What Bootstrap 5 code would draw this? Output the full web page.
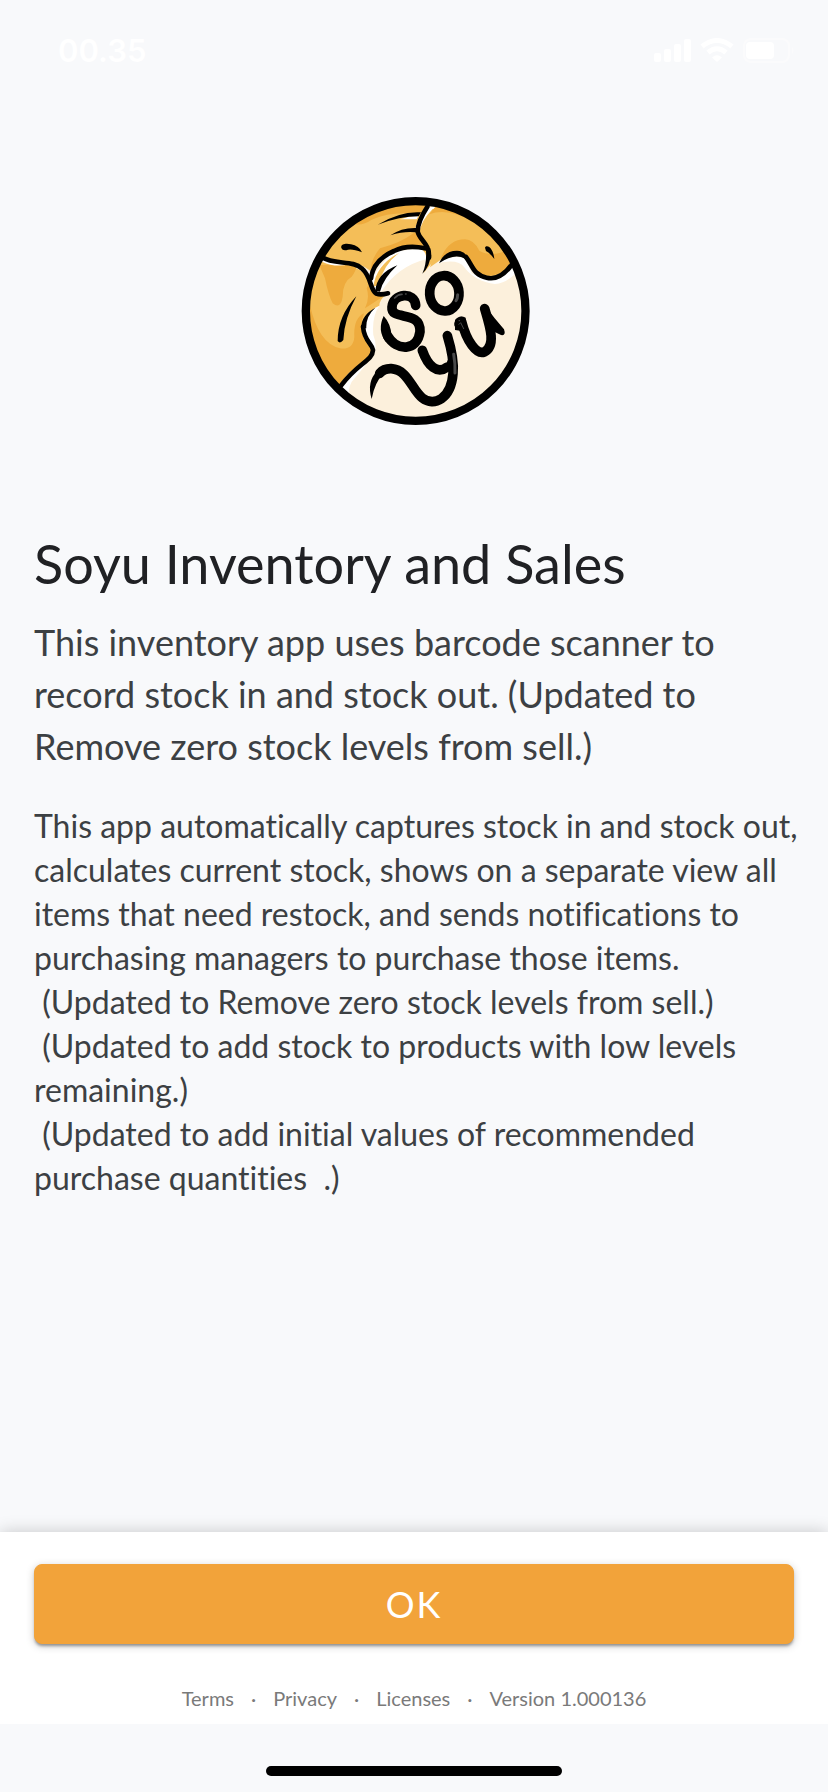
<!DOCTYPE html>
<html lang="en">
<head>
<meta charset="utf-8">
<meta name="viewport" content="width=device-width, initial-scale=1">
<title>Soyu Inventory and Sales</title>
<link href="https://cdn.jsdelivr.net/npm/bootstrap@5.3.0/dist/css/bootstrap.min.css" rel="stylesheet">
<style>
  body { background: #f8f9fb; color: #3c4043; font-family: Lato, "Liberation Sans", sans-serif; font-variant-ligatures: none; }
  .status-bar { padding: 31px 33px 0 58px; color: #fff; }
  .status-time { font: 600 31px/40px Inter, "Liberation Sans", sans-serif; }
  .page-text { padding: 0 24px 0 34px; }
  .logo-area { padding: 126px 0 103px; }
  .app-logo { width: 232px; height: 232px; }
  .app-title { color: #202124; font-size: 54px; line-height: 64px; margin-bottom: 20px; }
  .app-summary { font-size: 36px; line-height: 52px; margin-bottom: 32px; }
  .app-details { font-size: 32px; line-height: 44px; white-space: pre-wrap; }
  .action-panel { padding: 32px 34px 12px; box-shadow: 0 0 16px rgba(0,0,0,.2); clip-path: inset(-30px 0 0 0); }
  .btn-confirm {
    --bs-btn-color: #fff; --bs-btn-bg: #f2a33a; --bs-btn-border-color: #f2a33a;
    --bs-btn-hover-color: #fff; --bs-btn-hover-bg: #e6972d; --bs-btn-hover-border-color: #e6972d;
    --bs-btn-active-color: #fff; --bs-btn-active-bg: #d98b22; --bs-btn-active-border-color: #d98b22;
    font-size: 36px; line-height: 44px; padding: 17px; border-radius: 8px; letter-spacing: 2px;
    box-shadow: 0 3px 3px -1px rgba(0,0,0,.35), 0 2px 8px rgba(0,0,0,.2);
  }
  .legal-links { color: #7a7a7a; font-size: 20px; line-height: 28px; margin-top: 40px; gap: 17px; }
  .legal-links a { color: inherit; text-decoration: none; }
  .home-area { padding: 42px 0 16px; }
  .home-bar { width: 296px; height: 10px; background: #000; }
</style>
</head>
<body class="d-flex flex-column min-vh-100">
<header class="status-bar d-flex justify-content-between align-items-center">
  <span class="status-time">00.35</span>
  <svg width="142" height="26" viewBox="0 0 142 26" fill="#fff" role="img" aria-label="Signal, Wi-Fi, battery">
    <rect x="1" y="15" width="7" height="9" rx="2"/><rect x="11" y="11" width="7" height="13" rx="2"/><rect x="21" y="6" width="7" height="18" rx="2"/><rect x="31" y="1" width="7" height="23" rx="2"/>
    <g fill="none" stroke="#fff" stroke-width="5"><path d="M49 8.500Q64-3.500 79 8.500"/><path d="M55 14.500Q64 7 73 14.500"/></g>
    <path d="M59 19.500Q64 15 69 19.500L64 24Z"/>
    <rect x="91" y="1" width="45" height="23" rx="7" fill="none" stroke="#fbfbfc" stroke-width="2"/>
    <rect x="93" y="4" width="28" height="17" rx="4"/>
    <path d="M139 9q3 3.500 0 7z" fill="#fbfbfc"/>
  </svg>
</header>
<main class="flex-grow-1">
  <div class="logo-area d-flex justify-content-center">
    <svg class="app-logo" viewBox="24 36 696 696" role="img" aria-label="Soyu logo">
      <defs><clipPath id="disc"><circle cx="377" cy="378" r="330"/></clipPath></defs>
      <g clip-path="url(#disc)">
        <rect x="24" y="36" width="696" height="696" fill="#fcf0dc"/>
        <!-- white edges under the dough -->
        <path fill="#fff" d="M240 285L305 200 400 190 410 222Q325 243 275 318L250 320ZM250 350Q262 365 268 362 245 395 250 450 262 480 253 505 225 545 185 590 174 610 178 625L130 600 225 500 215 400ZM440 235Q490 205 528 223L545 265Q590 290 670 235L690 250Q655 295 615 297 555 290 523 247 505 220 440 235ZM405 75L435 60 440 70Q390 120 388 145L375 130ZM395 160Q430 190 425 215L415 245 395 190Z"/>
        <!-- left dough -->
        <path fill="#f4be58" d="M30 210L100 222Q190 232 235 275 240 320 285 332 268 345 268 362 235 375 219 410 212 450 245 485 255 510 225 530 170 560 148 600L90 640 30 400Z"/>
        <path fill="#eeab3d" d="M60 360Q85 475 150 490 190 495 193 455 190 400 222 385 205 430 225 468 260 505 225 530 175 555 148 600L105 615 40 500ZM88 240L195 236Q205 248 185 275 158 290 158 335 152 375 128 355 115 330 105 280ZM235 300Q240 325 285 330L255 350 225 370Q240 340 230 310Z"/>
        <path fill="#fff" d="M100 223Q140 232 180 236 140 250 96 230ZM210 242Q230 265 240 264L246 250 235 285Z"/>
        <!-- upper dough -->
        <path fill="#f4be58" d="M90 215L160 100 300 40 410 50 375 130 400 185Q300 180 245 260 210 230 160 230 120 228 90 215Z"/>
        <path fill="#eeab3d" d="M185 115L280 60 415 55 390 90Q315 75 245 104 215 125 185 115ZM400 140L370 145Q330 175 270 190 240 225 242 265 290 185 405 185Z"/>
        <path fill="#fff" d="M330 103Q365 91 385 93L380 103ZM207 240Q228 262 238 263L246 250 236 280Z"/>
        <path fill="#f4be58" d="M250 305Q258 240 328 203 280 238 266 300ZM398 195Q420 215 400 265L425 235Q440 215 395 165Z"/>
        <!-- right dough -->
        <path fill="#f4be58" d="M428 72Q390 110 388 146 392 170 420 192 430 225 420 247L450 226Q480 195 525 215 550 260 585 273 635 280 660 235L650 190 555 85Z"/>
        <path fill="#eeab3d" d="M452 221Q475 163 525 163 550 163 568 197 608 220 662 190L665 235Q630 282 570 268 545 245 525 212 485 195 452 221ZM418 88Q475 65 560 116L540 85 440 60Z"/>
        <!-- contours -->
        <g fill="none" stroke="#000" stroke-width="14" stroke-linecap="round" stroke-linejoin="round">
          <path d="M96 217C132 240 190 225 215 250C246 276 239 315 259 326Q272 331 294 325"/>
          <path d="M243 280Q250 225 312 198Q352 178 405 190"/>
          <path d="M412 65Q383 110 383 139C387 165 420 175 417 218"/>
          <path d="M528 216C548 242 550 270 590 278Q630 288 666 238"/>
          <path d="M219 425C223 470 246 475 249 495C247 529 205 532 153 602"/>
        </g>
        <path d="M408 190L421 190Q426 239 397 266 411 236 408 190ZM447 235Q465 193 510 198 533 204 540 235L525 221Q493 203 447 235ZM263 119Q330 78 393 82L386 94Q330 94 263 119ZM301 151Q337 126 383 129L388 144Q350 136 301 151ZM322 241Q260 265 256 318L270 320Q280 280 322 241ZM154 189C151 177 168 174 183 178Q207 182 216 202 188 191 174 194 158 199 154 189ZM585 188C590 178 609 186 613 222Q598 202 588 198ZM199 334Q143 393 143 468 150 478 160 465 163 400 199 334ZM256 368Q212 392 214 430L229 430Q227 394 256 368Z"/>
        <!-- hand-drawn wordmark -->
        <g fill="none" stroke="#000" stroke-width="29" stroke-linecap="round" stroke-linejoin="round">
          <path d="M377 361C374 318 309 325 306 366C302 410 393 372 390 440C382 500 320 499 293 453"/>
          <ellipse cx="463" cy="325" rx="44" ry="53" transform="rotate(-4 463 325)"/>
          <path d="M397 496C414 544 442 568 470 547"/>
          <path d="M472 452C483 488 493 528 489 566C483 642 432 666 397 639C365 614 354 554 304 551Q282 550 269 565"/>
          <path d="M507 417L515 410C530 470 560 510 583 501C619 482 600 425 584 371"/>
        </g>
        <path d="M281 393Q302 415 305 453L287 470Q261 436 281 393ZM245 642Q229 590 262 558L280 568Q255 590 245 642ZM584 360Q612 399 642 433 649 453 633 450L600 434ZM464 545L485 500 482 560ZM495 405Q508 388 527 398L530 440 495 435Z"/>
        <g fill="none" stroke="#4a4a4a" stroke-width="9" stroke-linecap="round">
          <path d="M491 508Q496 535 495 564"/><path d="M503 329Q503 340 498 347"/><path d="M314 339Q325 327 336 328" stroke-width="5"/><path d="M347 327h1" stroke-width="5"/>
          <path d="M507 418L512 413 521 431M507 407h2" stroke-width="3"/>
        </g>
      </g>
      <circle cx="377" cy="378" r="329.500" fill="none" stroke="#000" stroke-width="25"/>
    </svg>
  </div>
  <div class="page-text">
    <h1 class="app-title fw-normal">Soyu Inventory and Sales</h1>
    <p class="app-summary">This inventory app uses barcode scanner to record stock in and stock out. (Updated to Remove zero stock levels from sell.)</p>
    <p class="app-details mb-0">This app automatically captures stock in and stock out, calculates current stock, shows on a separate view all items that need restock, and sends notifications to purchasing managers to purchase those items.
 (Updated to Remove zero stock levels from sell.)
 (Updated to add stock to products with low levels remaining.)
 (Updated to add initial values of recommended purchase quantities  .)</p>
  </div>
</main>
<footer>
  <div class="action-panel bg-white">
    <button type="button" class="btn btn-confirm w-100">OK</button>
    <nav class="legal-links d-flex justify-content-center" aria-label="Legal">
      <a href="#terms">Terms</a><span>·</span>
      <a href="#privacy">Privacy</a><span>·</span>
      <a href="#licenses">Licenses</a><span>·</span>
      <span>Version 1.000136</span>
    </nav>
  </div>
  <div class="home-area"><div class="home-bar rounded-pill mx-auto"></div></div>
</footer>
<script src="https://cdn.jsdelivr.net/npm/bootstrap@5.3.0/dist/js/bootstrap.bundle.min.js"></script>
</body>
</html>
